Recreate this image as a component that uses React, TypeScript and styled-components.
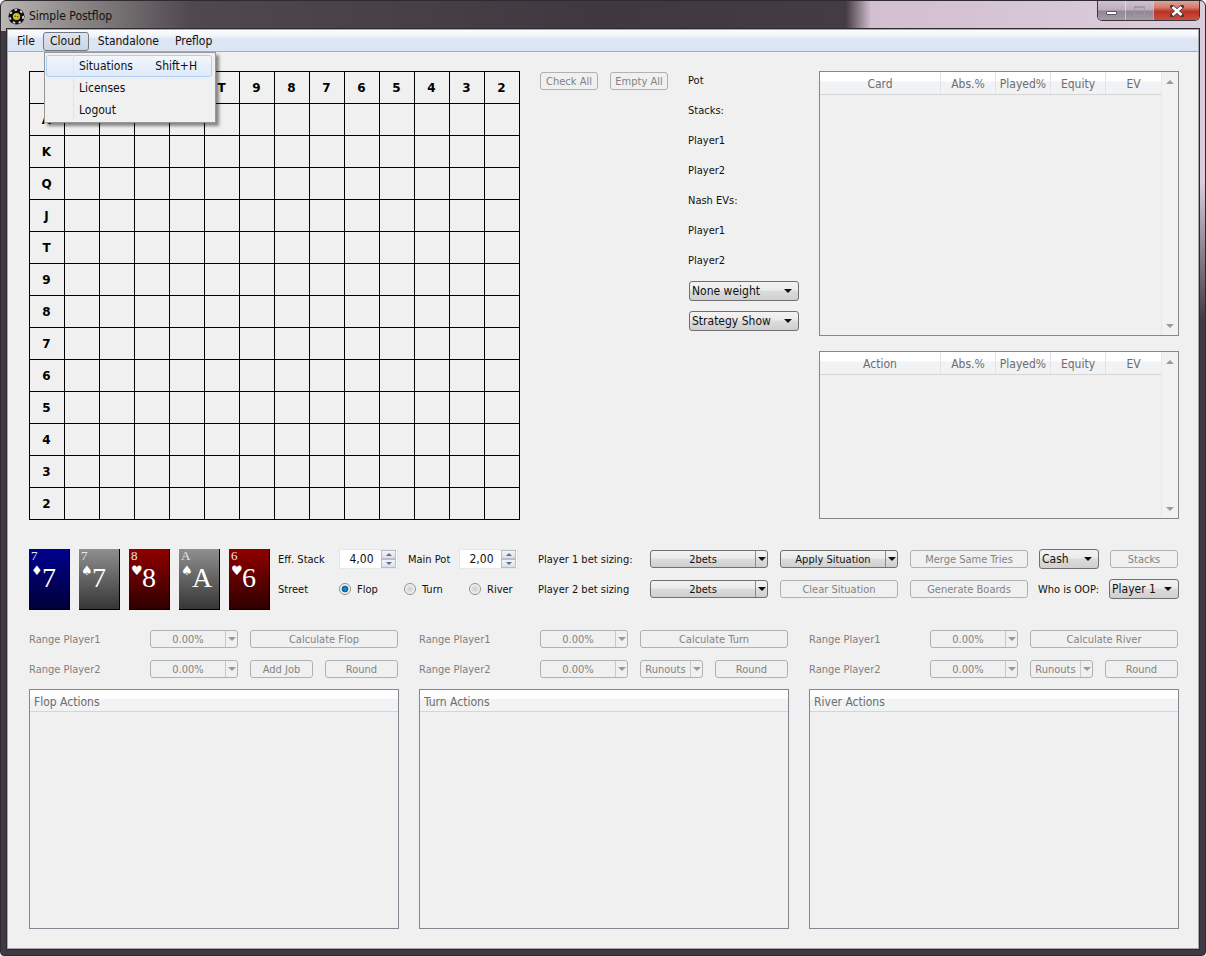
import React from "react";
import styled, { createGlobalStyle } from "styled-components";

const Global = createGlobalStyle`
  html, body { margin: 0; padding: 0; background: #fff; }
  * { box-sizing: border-box; }
`;

const Desktop = styled.div`
  width: 1206px;
  height: 956px;
  overflow: hidden;
  display: flex;
  flex-direction: column;
  padding: 0 6px 6px 6px;
  border-radius: 6px 6px 4px 4px;
  border: 1px solid #2e2a30;
  font-family: "DejaVu Sans Condensed", "DejaVu Sans", sans-serif;
  font-stretch: condensed;
  font-size: 11px;
  color: #111;
  background:
    linear-gradient(#3e3943, #3e3943) 0 30px / 6px 100% no-repeat,
    linear-gradient(to bottom, rgba(62,57,67,0) 0, rgba(62,57,67,0) 180px, #3e3943 320px),
    linear-gradient(to right, #b9b6b4 0, #8f8b8b 70px, #4f484d 190px, #3f3840 600px, #443c44 845px, #d2bfd0 870px, #dccddc 1206px);
`;

const TitleBar = styled.div`
  height: 28px;
  flex: none;
  display: flex;
  align-items: flex-start;
`;

const TitleIcon = styled.svg`
  width: 17px;
  height: 17px;
  margin: 7px 0 0 1px;
  flex: none;
`;

const TitleText = styled.span`
  font-size: 12px;
  line-height: 16px;
  margin: 7px 0 0 4px;
  color: #111;
`;

const WindowButtons = styled.div`
  margin-left: auto;
  margin-right: -1px;
  display: flex;
  height: 20px;
  border: 1px solid #3a353c;
  border-top: 0;
  border-radius: 0 0 5px 5px;
  overflow: hidden;
`;

const WindowButton = styled.div<{ $w: number; $close?: boolean }>`
  width: ${(p) => p.$w}px;
  display: flex;
  align-items: center;
  justify-content: center;
  border-left: 1px solid rgba(255, 255, 255, 0.45);
  background: ${(p) =>
    p.$close
      ? "linear-gradient(#d8a79c 0, #d8786a 35%, #bb3226 55%, #c9503f 100%)"
      : "linear-gradient(#cfc0cf 0, #bdaebc 45%, #8f8893 55%, #a39aa6 100%)"};
  &:first-child { border-left: 0; }
`;

const MinGlyph = styled.div`
  width: 11px;
  height: 4px;
  margin-top: 5px;
  background: #fff;
  border: 1px solid #5a5560;
  border-radius: 1px;
`;

const MaxGlyph = styled.div`
  width: 11px;
  height: 10px;
  border: 1px solid #9d96a3;
  border-top-width: 2px;
  opacity: 0.9;
`;

const Client = styled.div`
  position: relative;
  flex: 1;
  display: flex;
  flex-direction: column;
  background: #f0f0f0;
  border: 1px solid #a8a8ac;
  outline: 1px solid #2e2a30;
`;

const MenuBar = styled.div`
  height: 22px;
  flex: none;
  display: flex;
  align-items: center;
  padding: 0 1px;
  font-size: 12px;
  background: linear-gradient(#fbfcfe 0, #f3f6fb 25%, #dde5f4 45%, #dce5f5 100%);
  border-bottom: 1px solid #a7abb3;
`;

const MenuItem = styled.div<{ $open?: boolean }>`
  height: 19px;
  margin-top: 2px;
  margin-right: ${(p) => (p.$open ? 1 : 0)}px;
  line-height: 17px;
  padding: ${(p) => (p.$open ? "0 7px 0 6px" : "0 7px")};
  border: 1px solid ${(p) => (p.$open ? "#6f7a86" : "transparent")};
  border-radius: 3px;
  color: #111;
  background: ${(p) => (p.$open ? "linear-gradient(#dfe5ef, #cbd4e2)" : "transparent")};
`;

const Dropdown = styled.div`
  position: absolute;
  left: 36px;
  top: 22px;
  width: 172px;
  height: 71px;
  z-index: 5;
  padding: 2px 2px 2px 1px;
  font-size: 12px;
  background: #f0f0f0;
  border: 1px solid #979797;
  box-shadow: 3px 3px 3px rgba(0, 0, 0, 0.45);
`;

const DropdownLine = styled.div`
  position: absolute;
  left: 28px;
  top: 2px;
  bottom: 2px;
  width: 1px;
  background: #e2e3e3;
`;

const DropdownItem = styled.div<{ $hot?: boolean }>`
  height: 22px;
  width: 166px;
  display: flex;
  align-items: center;
  padding-left: 32px;
  border: 1px solid ${(p) => (p.$hot ? "#aecff7" : "transparent")};
  border-radius: 3px;
  background: ${(p) => (p.$hot ? "linear-gradient(#f2f6fc, #dfeafa)" : "transparent")};
`;

const Shortcut = styled.span`
  margin-left: auto;
  margin-right: 14px;
`;

const Content = styled.div`
  flex: 1;
  display: flex;
  flex-direction: column;
  padding: 19px 0 0 21px;
`;

const TopRow = styled.div`
  display: flex;
  align-items: flex-start;
`;

const HandGrid = styled.div`
  display: grid;
  grid-template-columns: repeat(14, 35px);
  grid-auto-rows: 32px;
  width: 491px;
  border-top: 1px solid #000;
  border-left: 1px solid #000;
`;

const HandCell = styled.div`
  border-right: 1px solid #000;
  border-bottom: 1px solid #000;
  padding-right: 1px;
  display: flex;
  align-items: center;
  justify-content: center;
  font-family: "DejaVu Sans", sans-serif;
  font-stretch: normal;
  font-weight: 700;
  font-size: 12px;
  color: #000;
`;

const TopButtons = styled.div`
  display: flex;
  gap: 12px;
  margin: 1px 0 0 20px;
`;

const Btn = styled.div<{ $w?: number }>`
  width: ${(p) => (p.$w ? `${p.$w}px` : "auto")};
  height: 18px;
  flex: none;
  display: flex;
  align-items: center;
  justify-content: center;
  color: #838383;
  background: #f0f0f0;
  border: 1px solid #adb2b5;
  border-radius: 3px;
  white-space: nowrap;
`;

const InfoColumn = styled.div`
  width: 131px;
  margin-left: 20px;
  display: flex;
  flex-direction: column;
  gap: 10px;
`;

const InfoLabel = styled.div`
  height: 20px;
  line-height: 20px;
`;

const Select = styled.div<{ $w: number }>`
  width: ${(p) => p.$w}px;
  height: 20px;
  flex: none;
  display: flex;
  align-items: center;
  justify-content: space-between;
  padding: 0 6px 0 2px;
  font-size: 12px;
  color: #111;
  border: 1px solid #707070;
  border-radius: 3px;
  background: linear-gradient(#f2f2f2 0, #ebebeb 45%, #dcdcdc 50%, #cfcfcf 100%);
`;

const InfoSelect = styled(Select)`
  margin-left: 1px;
`;

const DownArrow = styled.span<{ $off?: boolean }>`
  width: 0;
  height: 0;
  flex: none;
  border-left: 4px solid transparent;
  border-right: 4px solid transparent;
  border-top: 4px solid ${(p) => (p.$off ? "#9a9a9a" : "#111")};
`;

const TablesColumn = styled.div`
  display: flex;
  flex-direction: column;
  gap: 15px;
`;

const Table = styled.div<{ $h: number }>`
  width: 360px;
  height: ${(p) => p.$h}px;
  display: flex;
  border: 1px solid #828790;
`;

const TableMain = styled.div`
  width: 341px;
`;

const Header = styled.div`
  height: 23px;
  display: grid;
  grid-template-columns: 121px 55px 55px 55px 55px;
  background: linear-gradient(#ffffff 0, #ffffff 40%, #f2f3f5 45%, #f1f2f4 100%);
  border-bottom: 1px solid #d5d5d5;
`;

const HeaderCell = styled.div`
  display: flex;
  align-items: center;
  justify-content: center;
  padding-top: 2px;
  font-size: 12px;
  color: #6d6d6d;
  border-right: 1px solid #e3e4e6;
  &:last-child { border-right: 0; }
`;

const ScrollTrack = styled.div`
  width: 17px;
  margin-left: auto;
  display: flex;
  flex-direction: column;
  align-items: center;
  justify-content: space-between;
  padding: 8px 0 7px;
  background: #f2f2f2;
  border-left: 1px solid #e8e8e8;
`;

const ArrowUp = styled.span`
  width: 0;
  height: 0;
  border-left: 4px solid transparent;
  border-right: 4px solid transparent;
  border-bottom: 4px solid #9b9b9b;
`;

const ArrowDown = styled.span`
  width: 0;
  height: 0;
  border-left: 4px solid transparent;
  border-right: 4px solid transparent;
  border-top: 4px solid #9b9b9b;
`;

const MiddleRow = styled.div`
  display: flex;
  margin-top: 29px;
  height: 61px;
`;

const Cards = styled.div`
  display: flex;
  gap: 9px;
`;

const Card = styled.div<{ $kind: "blue" | "gray" | "red" }>`
  width: 41px;
  height: 61px;
  color: #fff;
  padding: 1px 0 0 2px;
  border-right: 1px solid #000;
  border-bottom: 1px solid #000;
  background: ${(p) =>
    p.$kind === "blue"
      ? "linear-gradient(#000090, #000038)"
      : p.$kind === "red"
      ? "linear-gradient(#900000, #2e0000)"
      : "linear-gradient(#8f8f8f, #363636)"};
`;

const CardSmall = styled.div`
  font-family: "Liberation Serif", serif;
  font-stretch: normal;
  font-size: 13px;
  line-height: 12px;
  height: 12px;
  color: #e8e8f0;
`;

const CardFace = styled.div`
  display: flex;
  align-items: flex-start;
`;

const CardSuit = styled.span`
  font-family: "DejaVu Sans", sans-serif;
  font-stretch: normal;
  font-size: 13px;
  line-height: 12px;
  width: 11px;
  margin-top: 3px;
`;

const CardRank = styled.span`
  font-family: "Liberation Serif", serif;
  font-stretch: normal;
  font-size: 28px;
  line-height: 32px;
`;

const StackBlock = styled.div`
  width: 260px;
  margin-left: 8px;
  display: flex;
  flex-direction: column;
  gap: 10px;
`;

const StackRow = styled.div`
  height: 20px;
  display: flex;
  align-items: center;
`;

const FieldLabel = styled.span<{ $w: number; $ml?: number }>`
  width: ${(p) => p.$w}px;
  margin-left: ${(p) => p.$ml ?? 0}px;
  flex: none;
  white-space: nowrap;
`;

const Spin = styled.div`
  width: 59px;
  height: 20px;
  flex: none;
  display: flex;
  align-items: center;
  background: #fff;
  border: 1px solid #e6e7e8;
`;

const SpinValue = styled.span`
  flex: 1;
  text-align: center;
  font-size: 12px;
  padding-left: 2px;
`;

const SpinButtons = styled.div`
  width: 15px;
  height: 18px;
  margin-right: 1px;
  display: flex;
  flex-direction: column;
`;

const SpinButton = styled.div`
  flex: 1;
  display: flex;
  align-items: center;
  justify-content: center;
  background: linear-gradient(#f3f4f6, #dcdfe6);
  border: 1px solid #b9bdc6;
`;

const SpinUp = styled.span`
  width: 0;
  height: 0;
  border-left: 3px solid transparent;
  border-right: 3px solid transparent;
  border-bottom: 3px solid #5c6c9c;
`;

const SpinDown = styled.span`
  width: 0;
  height: 0;
  border-left: 3px solid transparent;
  border-right: 3px solid transparent;
  border-top: 3px solid #5c6c9c;
`;

const RadioItem = styled.div`
  width: 65px;
  flex: none;
  display: flex;
  align-items: center;
  gap: 6px;
`;

const Radio = styled.span<{ $on?: boolean }>`
  width: 12px;
  height: 12px;
  flex: none;
  border-radius: 50%;
  border: 1px solid #8e8f8f;
  background: ${(p) =>
    p.$on
      ? "radial-gradient(circle closest-side, #2a9ad0 0, #0d5f95 60%, #e6edf2 74%, #f6f6f6 100%)"
      : "radial-gradient(circle closest-side, #cfcfcf 0, #dedede 55%, #f8f8f8 100%)"};
`;

const SizingGrid = styled.div`
  display: grid;
  grid-template-columns: 100px 118px 118px 118px 140px;
  grid-auto-rows: 20px;
  column-gap: 12px;
  row-gap: 10px;
  align-items: center;
`;

const SizingLabel = styled.span`
  white-space: nowrap;
`;

const SplitCombo = styled.div`
  height: 18px;
  display: flex;
  align-items: center;
  border: 1px solid #707070;
  border-radius: 3px;
  background: linear-gradient(#f2f2f2 0, #ebebeb 45%, #dcdcdc 50%, #cfcfcf 100%);
`;

const ComboText = styled.span`
  flex: 1;
  text-align: center;
`;

const ComboArrow = styled.span<{ $w: number; $off?: boolean }>`
  width: ${(p) => p.$w}px;
  height: 100%;
  flex: none;
  display: flex;
  align-items: center;
  justify-content: center;
  border-left: 1px solid ${(p) => (p.$off ? "#c6c8ca" : "#8a8a8a")};
`;

const LastCell = styled.div`
  margin-left: -2px;
  width: 141px;
  display: flex;
  align-items: center;
  justify-content: space-between;
`;

const CashSelect = styled(Select)`
  margin-left: 1px;
`;

const CashTail = styled(Btn)`
  margin-right: 1px;
`;

const Groups = styled.div`
  display: flex;
  gap: 20px;
  margin-top: 20px;
`;

const Group = styled.div`
  width: 370px;
  display: flex;
  flex-direction: column;
`;

const RangeRow = styled.div`
  height: 18px;
  margin-bottom: 12px;
  display: flex;
  align-items: center;
`;

const RangeLabel = styled.span`
  width: 121px;
  flex: none;
  color: #7f7f7f;
`;

const RangeCombo = styled.div<{ $w: number; $left?: boolean }>`
  width: ${(p) => p.$w}px;
  height: 18px;
  flex: none;
  display: flex;
  align-items: center;
  color: #838383;
  background: #f0f0f0;
  border: 1px solid #adb2b5;
  border-radius: 3px;
`;

const RangeSpacer = styled.span`
  width: 12px;
  flex: none;
`;

const Panel = styled.div`
  width: 370px;
  height: 240px;
  margin-top: -1px;
  border: 1px solid #828790;
`;

const PanelHeader = styled.div`
  height: 22px;
  padding: 2px 0 0 4px;
  display: flex;
  align-items: center;
  font-size: 12px;
  color: #6d6d6d;
  background: linear-gradient(#ffffff 0, #ffffff 40%, #f2f3f5 45%, #f1f2f4 100%);
  border-bottom: 1px solid #d5d5d5;
`;

const RANKS = ["A", "K", "Q", "J", "T", "9", "8", "7", "6", "5", "4", "3", "2"];
const COLS = ["Abs.%", "Played%", "Equity", "EV"];

// The first four column heads lie under the open Cloud menu, so they show nothing.
const gridLabels: string[] = ["", "", "", "", "", ...RANKS.slice(4)];
RANKS.forEach((r) => {
  gridLabels.push(r, ...Array(13).fill(""));
});

const CARDS: { r: string; s: string; k: "blue" | "gray" | "red" }[] = [
  { r: "7", s: "♦", k: "blue" },
  { r: "7", s: "♠", k: "gray" },
  { r: "8", s: "♥", k: "red" },
  { r: "A", s: "♠", k: "gray" },
  { r: "6", s: "♥", k: "red" },
];

const GROUPS = [
  { name: "Flop", runouts: false },
  { name: "Turn", runouts: true },
  { name: "River", runouts: true },
];

function DataTable({ first, h }: { first: string; h: number }) {
  return (
    <Table $h={h}>
      <TableMain>
        <Header>
          <HeaderCell>{first}</HeaderCell>
          {COLS.map((c) => (
            <HeaderCell key={c}>{c}</HeaderCell>
          ))}
        </Header>
      </TableMain>
      <ScrollTrack>
        <ArrowUp />
        <ArrowDown />
      </ScrollTrack>
    </Table>
  );
}

function PercentCombo() {
  return (
    <RangeCombo $w={88}>
      <ComboText>0.00%</ComboText>
      <ComboArrow $w={12} $off>
        <DownArrow $off />
      </ComboArrow>
    </RangeCombo>
  );
}

function Spinner({ value }: { value: string }) {
  return (
    <Spin>
      <SpinValue>{value}</SpinValue>
      <SpinButtons>
        <SpinButton><SpinUp /></SpinButton>
        <SpinButton><SpinDown /></SpinButton>
      </SpinButtons>
    </Spin>
  );
}

function Bets() {
  return (
    <SplitCombo>
      <ComboText>2bets</ComboText>
      <ComboArrow $w={12}><DownArrow /></ComboArrow>
    </SplitCombo>
  );
}

export default function App() {
  return (
    <>
      <Global />
      <Desktop>
        <TitleBar>
          <TitleIcon viewBox="0 0 17 17">
            <circle cx="8.5" cy="8.5" r="8" fill="#111" />
            <circle cx="8.5" cy="8.5" r="6.6" fill="none" stroke="#d8d8d8" strokeWidth="1.8" strokeDasharray="2.4 3.4" />
            <circle cx="8.5" cy="8.5" r="3.6" fill="#d4c422" />
            <circle cx="7.3" cy="8.2" r="0.8" fill="#4a4a10" />
            <circle cx="9.7" cy="8.8" r="0.8" fill="#4a4a10" />
          </TitleIcon>
          <TitleText>Simple Postflop</TitleText>
          <WindowButtons>
            <WindowButton $w={27}><MinGlyph /></WindowButton>
            <WindowButton $w={28}><MaxGlyph /></WindowButton>
            <WindowButton $w={46} $close>
              <svg width="14" height="12" viewBox="0 0 14 12">
                <path d="M2 1.5 L12 10.5 M12 1.5 L2 10.5" stroke="#4a3a3a" strokeWidth="4" strokeLinecap="square" />
                <path d="M2.5 2 L11.5 10 M11.5 2 L2.5 10" stroke="#fff" strokeWidth="2.6" />
              </svg>
            </WindowButton>
          </WindowButtons>
        </TitleBar>
        <Client>
          <MenuBar>
            <MenuItem>File</MenuItem>
            <MenuItem $open>Cloud</MenuItem>
            <MenuItem>Standalone</MenuItem>
            <MenuItem>Preflop</MenuItem>
          </MenuBar>
          <Dropdown>
            <DropdownLine />
            <DropdownItem $hot>Situations<Shortcut>Shift+H</Shortcut></DropdownItem>
            <DropdownItem>Licenses</DropdownItem>
            <DropdownItem>Logout</DropdownItem>
          </Dropdown>
          <Content>
            <TopRow>
              <HandGrid>
                {gridLabels.map((l, i) => (
                  <HandCell key={i}>{l}</HandCell>
                ))}
              </HandGrid>
              <TopButtons>
                <Btn $w={58}>Check All</Btn>
                <Btn $w={58}>Empty All</Btn>
              </TopButtons>
              <InfoColumn>
                <InfoLabel>Pot</InfoLabel>
                <InfoLabel>Stacks:</InfoLabel>
                <InfoLabel>Player1</InfoLabel>
                <InfoLabel>Player2</InfoLabel>
                <InfoLabel>Nash EVs:</InfoLabel>
                <InfoLabel>Player1</InfoLabel>
                <InfoLabel>Player2</InfoLabel>
                <InfoSelect $w={110}>None weight<DownArrow /></InfoSelect>
                <InfoSelect $w={110}>Strategy Show<DownArrow /></InfoSelect>
              </InfoColumn>
              <TablesColumn>
                <DataTable first="Card" h={265} />
                <DataTable first="Action" h={168} />
              </TablesColumn>
            </TopRow>
            <MiddleRow>
              <Cards>
                {CARDS.map((c, i) => (
                  <Card key={i} $kind={c.k}>
                    <CardSmall>{c.r}</CardSmall>
                    <CardFace>
                      <CardSuit>{c.s}</CardSuit>
                      <CardRank>{c.r}</CardRank>
                    </CardFace>
                  </Card>
                ))}
              </Cards>
              <StackBlock>
                <StackRow>
                  <FieldLabel $w={61}>Eff. Stack</FieldLabel>
                  <Spinner value="4,00" />
                  <FieldLabel $w={51} $ml={10}>Main Pot</FieldLabel>
                  <Spinner value="2,00" />
                </StackRow>
                <StackRow>
                  <FieldLabel $w={61}>Street</FieldLabel>
                  <RadioItem><Radio $on />Flop</RadioItem>
                  <RadioItem><Radio />Turn</RadioItem>
                  <RadioItem><Radio />River</RadioItem>
                </StackRow>
              </StackBlock>
              <SizingGrid>
                <SizingLabel>Player 1 bet sizing:</SizingLabel>
                <Bets />
                <SplitCombo>
                  <ComboText>Apply Situation</ComboText>
                  <ComboArrow $w={12}><DownArrow /></ComboArrow>
                </SplitCombo>
                <Btn>Merge Same Tries</Btn>
                <LastCell>
                  <CashSelect $w={60}>Cash<DownArrow /></CashSelect>
                  <CashTail $w={68}>Stacks</CashTail>
                </LastCell>
                <SizingLabel>Player 2 bet sizing</SizingLabel>
                <Bets />
                <Btn>Clear Situation</Btn>
                <Btn>Generate Boards</Btn>
                <LastCell>
                  <span>Who is OOP:</span>
                  <Select $w={70}>Player 1<DownArrow /></Select>
                </LastCell>
              </SizingGrid>
            </MiddleRow>
            <Groups>
              {GROUPS.map((g) => (
                <Group key={g.name}>
                  <RangeRow>
                    <RangeLabel>Range Player1</RangeLabel>
                    <PercentCombo />
                    <RangeSpacer />
                    <Btn $w={148}>Calculate {g.name}</Btn>
                  </RangeRow>
                  <RangeRow>
                    <RangeLabel>Range Player2</RangeLabel>
                    <PercentCombo />
                    <RangeSpacer />
                    {g.runouts ? (
                      <RangeCombo $w={63}>
                        <ComboText>Runouts</ComboText>
                        <ComboArrow $w={12} $off><DownArrow $off /></ComboArrow>
                      </RangeCombo>
                    ) : (
                      <Btn $w={63}>Add Job</Btn>
                    )}
                    <RangeSpacer />
                    <Btn $w={73}>Round</Btn>
                  </RangeRow>
                  <Panel>
                    <PanelHeader>{g.name} Actions</PanelHeader>
                  </Panel>
                </Group>
              ))}
            </Groups>
          </Content>
        </Client>
      </Desktop>
    </>
  );
}
